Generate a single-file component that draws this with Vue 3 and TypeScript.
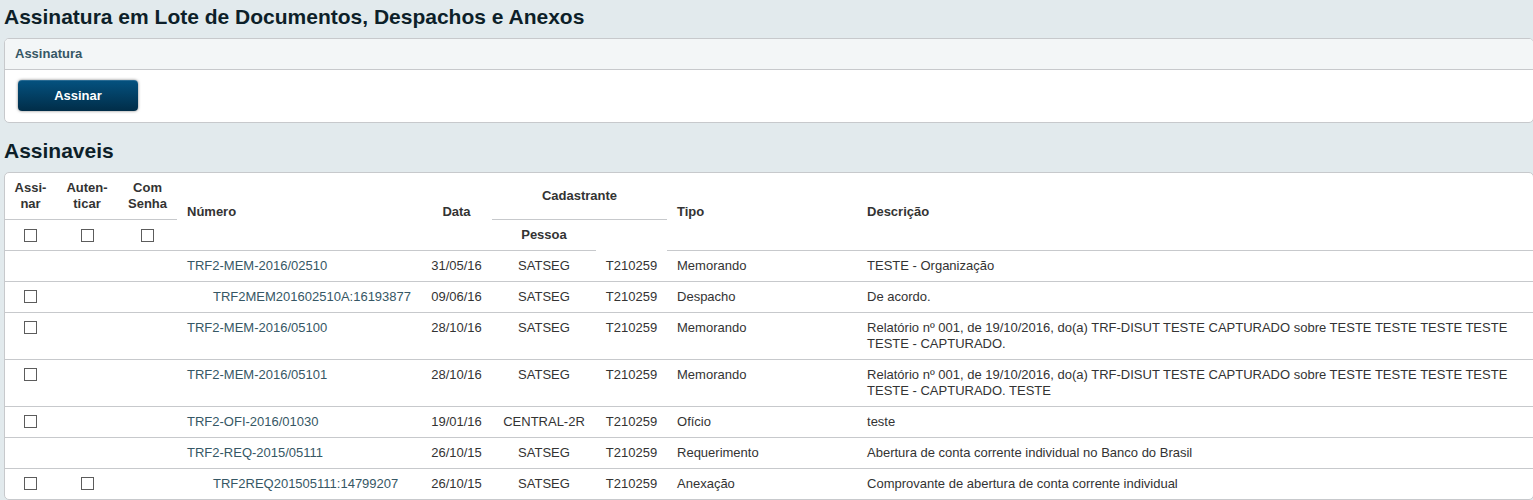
<script setup lang="ts">
import { reactive, ref } from 'vue'

interface Item {
  numero: string
  anexo?: boolean
  assinar?: boolean
  autenticar?: boolean
  data: string
  lotacao: string
  pessoa: string
  tipo: string
  descricao: string
}

const itens: Item[] = [
  { numero: 'TRF2-MEM-2016/02510', data: '31/05/16', lotacao: 'SATSEG', pessoa: 'T210259', tipo: 'Memorando', descricao: 'TESTE - Organização' },
  { numero: 'TRF2MEM201602510A:16193877', anexo: true, assinar: true, data: '09/06/16', lotacao: 'SATSEG', pessoa: 'T210259', tipo: 'Despacho', descricao: 'De acordo.' },
  { numero: 'TRF2-MEM-2016/05100', assinar: true, data: '28/10/16', lotacao: 'SATSEG', pessoa: 'T210259', tipo: 'Memorando', descricao: 'Relatório nº 001, de 19/10/2016, do(a) TRF-DISUT TESTE CAPTURADO sobre TESTE TESTE TESTE TESTE TESTE - CAPTURADO.' },
  { numero: 'TRF2-MEM-2016/05101', assinar: true, data: '28/10/16', lotacao: 'SATSEG', pessoa: 'T210259', tipo: 'Memorando', descricao: 'Relatório nº 001, de 19/10/2016, do(a) TRF-DISUT TESTE CAPTURADO sobre TESTE TESTE TESTE TESTE TESTE - CAPTURADO. TESTE' },
  { numero: 'TRF2-OFI-2016/01030', assinar: true, data: '19/01/16', lotacao: 'CENTRAL-2R', pessoa: 'T210259', tipo: 'Ofício', descricao: 'teste' },
  { numero: 'TRF2-REQ-2015/05111', data: '26/10/15', lotacao: 'SATSEG', pessoa: 'T210259', tipo: 'Requerimento', descricao: 'Abertura de conta corrente individual no Banco do Brasil' },
  { numero: 'TRF2REQ201505111:14799207', anexo: true, assinar: true, autenticar: true, data: '26/10/15', lotacao: 'SATSEG', pessoa: 'T210259', tipo: 'Anexação', descricao: 'Comprovante de abertura de conta corrente individual' },
]

const assinar = ref<string[]>([])
const autenticar = ref<string[]>([])
const todos = reactive({ assinar: false, autenticar: false, senha: false })

function marcarAssinar() {
  assinar.value = todos.assinar ? itens.filter((i) => i.assinar).map((i) => i.numero) : []
}
function marcarAutenticar() {
  autenticar.value = todos.autenticar ? itens.filter((i) => i.autenticar).map((i) => i.numero) : []
}
</script>

<template>
  <main class="page">
    <h1 class="title">Assinatura em Lote de Documentos, Despachos e Anexos</h1>
    <section class="box">
      <h2 class="box-header">Assinatura</h2>
      <div class="box-body">
        <button type="button" class="btn">Assinar</button>
      </div>
    </section>

    <h1 class="title">Assinaveis</h1>
    <div class="box">
      <table class="grid">
        <colgroup>
          <col class="c-assinar" />
          <col class="c-autenticar" />
          <col class="c-senha" />
          <col class="c-numero" />
          <col class="c-data" />
          <col class="c-lotacao" />
          <col class="c-pessoa" />
          <col class="c-tipo" />
          <col />
        </colgroup>
        <thead>
          <tr>
            <th class="center"><label for="todos-assinar">Assi-<br />nar</label></th>
            <th class="center"><label for="todos-autenticar">Auten-<br />ticar</label></th>
            <th class="center"><label for="todos-senha">Com<br />Senha</label></th>
            <th rowspan="2">Número</th>
            <th rowspan="2" class="center">Data</th>
            <th colspan="2" class="center">Cadastrante</th>
            <th rowspan="2">Tipo</th>
            <th rowspan="2">Descrição</th>
          </tr>
          <tr>
            <th><input id="todos-assinar" v-model="todos.assinar" type="checkbox" @change="marcarAssinar" /></th>
            <th><input id="todos-autenticar" v-model="todos.autenticar" type="checkbox" @change="marcarAutenticar" /></th>
            <th><input id="todos-senha" v-model="todos.senha" type="checkbox" /></th>
            <th class="center">Pessoa</th>
            <td class="blank"></td>
          </tr>
        </thead>
        <tbody>
          <tr v-for="item in itens" :key="item.numero">
            <td>
              <input v-if="item.assinar" v-model="assinar" type="checkbox" :value="item.numero" :aria-label="'Assinar ' + item.numero" />
            </td>
            <td>
              <input v-if="item.autenticar" v-model="autenticar" type="checkbox" :value="item.numero" :aria-label="'Autenticar ' + item.numero" />
            </td>
            <td></td>
            <td :class="{ nested: item.anexo }"><a href="#">{{ item.numero }}</a></td>
            <td class="center">{{ item.data }}</td>
            <td class="center">{{ item.lotacao }}</td>
            <td class="center">{{ item.pessoa }}</td>
            <td>{{ item.tipo }}</td>
            <td>{{ item.descricao }}</td>
          </tr>
        </tbody>
      </table>
    </div>
  </main>
</template>

<style>
body {
  margin: 0;
  background: #e2eaed;
}
</style>

<style scoped>
.page {
  padding: 4px 0 0 4px;
  overflow: hidden;
  color: #333;
  font: 13px/16px "Liberation Sans", Arial, Helvetica, sans-serif;
}
.title {
  margin: 0 0 8px;
  color: #0d1f29;
  font-size: 21px;
  line-height: 26px;
  font-weight: bold;
}
.box {
  margin-right: -1px;
  border: 1px solid #c7c9cc;
  border-radius: 5px;
  background: #fff;
  overflow: hidden;
}
.box + .title {
  margin-top: 15px;
}
.box-header {
  margin: 0;
  padding: 7px 10px;
  border-bottom: 1px solid #c7c9cc;
  background: #f3f6f7;
  color: #365765;
  font-size: 13px;
  line-height: 16px;
}
.box-body {
  padding: 10px 13px 11px;
}
.btn {
  display: block;
  min-width: 120px;
  padding: 8px 36px 7px;
  border: 0;
  border-radius: 4px;
  background: linear-gradient(#045280, #012d48);
  box-shadow: 0 0 3px rgba(0, 0, 0, 0.5), inset 0 1px 0 rgba(255, 255, 255, 0.15);
  color: #fff;
  font: bold 13px/16px "Liberation Sans", Arial, Helvetica, sans-serif;
  cursor: pointer;
}
.grid {
  width: 100%;
  table-layout: fixed;
  border-collapse: separate;
  border-spacing: 0;
}
.c-assinar { width: 51px; }
.c-autenticar { width: 62px; }
.c-senha { width: 59px; }
.c-numero { width: 244px; }
.c-data { width: 71px; }
.c-lotacao { width: 104px; }
.c-pessoa { width: 71px; }
.c-tipo { width: 190px; }
th,
td {
  padding: 7px 10px;
  border-bottom: 1px solid #c7c9cc;
  text-align: left;
  vertical-align: top;
}
th {
  vertical-align: middle;
}
tbody tr:last-child td,
.blank {
  border-bottom: 0;
}
.center {
  padding-left: 0;
  padding-right: 0;
  text-align: center;
}
.nested {
  padding-left: 36px;
  padding-right: 0;
}
a {
  color: #365765;
  text-decoration: none;
}
input {
  appearance: none;
  display: block;
  width: 13px;
  height: 13px;
  margin: 1px auto 2px;
  border: 1px solid #5c5c5c;
  background: #fff;
}
thead input {
  margin: 2px auto 1px;
}
input:checked {
  background: #045280;
  box-shadow: inset 0 0 0 2px #fff;
}
</style>
